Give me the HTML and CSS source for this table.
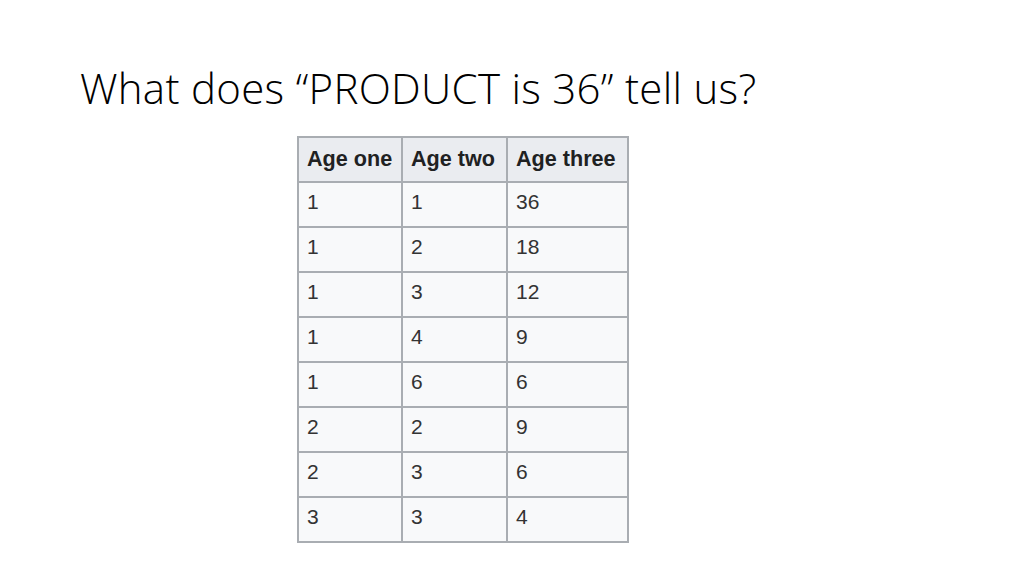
FILE: index.html
```html
<!DOCTYPE html>
<html>
<head>
<meta charset="utf-8">
<link rel="stylesheet" href="styles.css">
</head>
<body>
<div class="slide">
  <h1 class="title">What does “PRODUCT is 36” tell us?</h1>
  <div class="table-wrap">
    <table class="ages">
      <thead>
        <tr><th class="c1">Age one</th><th class="c2">Age two</th><th class="c3">Age three</th></tr>
      </thead>
      <tbody>
        <tr><td>1</td><td>1</td><td>36</td></tr>
        <tr><td>1</td><td>2</td><td>18</td></tr>
        <tr><td>1</td><td>3</td><td>12</td></tr>
        <tr><td>1</td><td>4</td><td>9</td></tr>
        <tr><td>1</td><td>6</td><td>6</td></tr>
        <tr><td>2</td><td>2</td><td>9</td></tr>
        <tr><td>2</td><td>3</td><td>6</td></tr>
        <tr><td>3</td><td>3</td><td>4</td></tr>
      </tbody>
    </table>
  </div>
</div>
</body>
</html>
```
FILE: styles.css
```css
html, body {
  margin: 0;
  padding: 0;
  background: #ffffff;
}
.slide {
  width: 1024px;
  height: 576px;
  display: flex;
  flex-direction: column;
  overflow: hidden;
}
.title {
  margin: 0;
  padding: 60px 0 0 80px;
  font-family: "Open Sans", sans-serif;
  font-weight: 300;
  font-size: 42px;
  line-height: 56px;
  color: #000;
  letter-spacing: 0.3px;
  white-space: nowrap;
}
.table-wrap {
  padding: 20px 0 0 297px;
}
.ages {
  border-collapse: collapse;
  font-family: "Liberation Sans", Arial, sans-serif;
  font-size: 21px;
  color: #222;
  background: #f8f9fa;
  border: 2px solid #a9adb2;
}
.ages th, .ages td {
  border: 2px solid #a9adb2;
  text-align: left;
  padding: 0 0 0 8px;
  box-sizing: border-box;
}
.ages th {
  background: #eaecf0;
  font-weight: bold;
  font-size: 21.6px;
  height: 45px;
  color: #202122;
  padding-bottom: 2px;
}
.ages td {
  height: 45px;
  color: #333;
  padding-bottom: 5px;
}
.c1 { width: 104px; }
.c2 { width: 105px; }
.c3 { width: 121px; }
```
